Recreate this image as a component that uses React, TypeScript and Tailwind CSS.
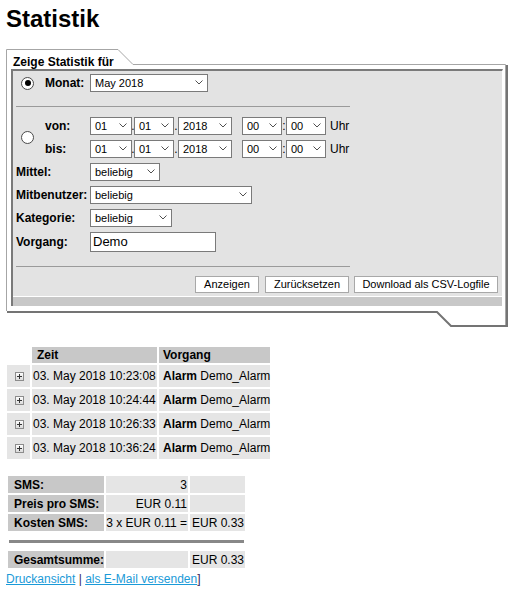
import React from "react";

function Chevron() {
  return (
    <svg width="8" height="5" viewBox="0 0 8 5" className="block">
      <path d="M0.5 0.5 L4 4 L7.5 0.5" stroke="#505050" strokeWidth="1" fill="none" />
    </svg>
  );
}

function Sel({ className, value }: { className: string; value: string }) {
  return (
    <div
      className={
        "relative h-[18px] shrink-0 border border-[#7a7a7a] bg-white pl-[4px] text-[11px] leading-[16px] whitespace-nowrap " +
        className
      }
    >
      {value}
      <span className="absolute right-[4px] top-[5px]">
        <Chevron />
      </span>
    </div>
  );
}

function Radio({ checked }: { checked?: boolean }) {
  return (
    <span className="flex h-[13px] w-[13px] items-center justify-center rounded-full border border-[#4a4a4a] bg-white">
      {checked ? <span className="h-[6px] w-[6px] rounded-full bg-black" /> : null}
    </span>
  );
}

function Sep({ ch, w }: { ch: string; w: string }) {
  return (
    <span className={"flex shrink-0 justify-center text-[12px] leading-[18px] " + w}>
      {ch}
    </span>
  );
}

function DateRow({ label }: { label: string }) {
  return (
    <div className="flex h-[18px] items-center">
      <span className="w-[45px] shrink-0 text-[12px] font-bold leading-[14px]">{label}</span>
      <Sel className="w-[42px]" value="01" />
      <Sep ch="." w="w-[2px]" />
      <Sel className="w-[40px]" value="01" />
      <Sep ch="." w="w-[4px]" />
      <Sel className="w-[54px]" value="2018" />
      <span className="w-[10px] shrink-0" />
      <Sel className="w-[40px]" value="00" />
      <Sep ch=":" w="w-[4px]" />
      <Sel className="w-[40px]" value="00" />
      <span className="ml-[4px] text-[12px] leading-[14px]">Uhr</span>
    </div>
  );
}

function Plus() {
  return (
    <svg width="9" height="9" viewBox="0 0 9 9" className="block">
      <defs>
        <linearGradient id="pg" x1="0" y1="0" x2="0" y2="1">
          <stop offset="0" stopColor="#ffffff" />
          <stop offset="1" stopColor="#d8d8d8" />
        </linearGradient>
      </defs>
      <rect x="0.5" y="0.5" width="8" height="8" fill="url(#pg)" stroke="#8c8c8c" />
      <path d="M2 4.5 H7 M4.5 2 V7" stroke="#333" strokeWidth="1" />
    </svg>
  );
}

const times = [
  "03. May 2018 10:23:08",
  "03. May 2018 10:24:44",
  "03. May 2018 10:26:33",
  "03. May 2018 10:36:24",
];

export default function App() {
  return (
    <div className="min-h-[604px] w-[528px] bg-white pl-[6px] font-['Liberation_Sans',Arial,sans-serif] text-black">
      <h1 className="pt-[5px] text-[24px] font-bold leading-[28px]">Statistik</h1>

      {/* Frame */}
      <div className="relative mt-[16px] h-[279px] w-[502px]">
        <svg
          className="pointer-events-none absolute inset-0"
          width="502"
          height="279"
          viewBox="0 0 502 279"
        >
          <path
            d="M0.5 262 V0.5 H112 L127 15.5 H499.5 V276"
            stroke="#a6a6a6"
            strokeWidth="1"
            fill="none"
          />
          <path
            d="M1 263 H431 L445 277 H501 V16"
            stroke="#747474"
            strokeWidth="2"
            fill="none"
          />
        </svg>
        <div className="relative">
          <div className="ml-[7px] pt-[7px] text-[12px] font-bold leading-[13px]">
            Zeige Statistik für
          </div>
          <div className="ml-[5px] w-[492px] border-l-2 border-r border-t-2 border-l-[#7a7a7a] border-r-white border-t-[#7a7a7a] bg-[#e3e3e3]">
            <div className="pl-[3px]">
              {/* Monat */}
              <div className="mt-[3px] flex h-[18px] items-center">
                <span className="w-[29px] shrink-0 pl-[5px]">
                  <Radio checked />
                </span>
                <span className="w-[45px] shrink-0 text-[12px] font-bold leading-[14px]">Monat:</span>
                <Sel className="w-[118px]" value="May 2018" />
              </div>

              <div className="mt-[14px] h-px w-[334px] bg-[#9a9a9a]" />

              {/* von / bis */}
              <div className="mt-[10px] flex">
                <span className="flex w-[29px] shrink-0 items-center pl-[5px]">
                  <Radio />
                </span>
                <div className="flex flex-col gap-[5px]">
                  <DateRow label="von:" />
                  <DateRow label="bis:" />
                </div>
              </div>

              <div className="mt-[5px] flex h-[18px] items-center">
                <span className="w-[74px] shrink-0 text-[12px] font-bold leading-[14px]">Mittel:</span>
                <Sel className="w-[70px]" value="beliebig" />
              </div>
              <div className="mt-[5px] flex h-[18px] items-center">
                <span className="w-[74px] shrink-0 whitespace-nowrap text-[12px] font-bold leading-[14px]">
                  Mitbenutzer:
                </span>
                <Sel className="w-[162px]" value="beliebig" />
              </div>
              <div className="mt-[5px] flex h-[18px] items-center">
                <span className="w-[74px] shrink-0 text-[12px] font-bold leading-[14px]">Kategorie:</span>
                <Sel className="w-[82px]" value="beliebig" />
              </div>
              <div className="mt-[5px] flex h-[20px] items-center">
                <span className="w-[74px] shrink-0 text-[12px] font-bold leading-[14px]">Vorgang:</span>
                <div className="h-[20px] w-[126px] border border-[#7a7a7a] bg-white pl-[2px] text-[13px] leading-[18px]">
                  Demo
                </div>
              </div>

              <div className="mt-[14px] h-px w-[334px] bg-[#9a9a9a]" />

              <div className="mt-[9px] flex justify-end pr-[4px]">
                <div className="h-[17px] w-[64px] border border-[#a8a8a8] bg-white text-center text-[11px] leading-[15px]">
                  Anzeigen
                </div>
                <div className="ml-[6px] h-[17px] w-[84px] border border-[#a8a8a8] bg-white text-center text-[11px] leading-[15px]">
                  Zurücksetzen
                </div>
                <div className="ml-[5px] h-[17px] w-[144px] border border-[#a8a8a8] bg-white text-center text-[11px] leading-[15px]">
                  Download als CSV-Logfile
                </div>
              </div>
            </div>
            <div className="mt-[3px] h-[10px] border-t border-white bg-[#c8c8c8]" />
          </div>
        </div>
      </div>

      {/* Event table */}
      <table className="-ml-[1px] mt-[17px] w-[267px] table-fixed border-separate border-spacing-[2px] text-[12px] leading-[14px]">
        <thead>
          <tr>
            <th className="w-[23px] p-0" />
            <th className="h-[16px] w-[125px] bg-[#c8c8c8] p-0 pl-[5px] text-left font-bold">Zeit</th>
            <th className="w-[111px] bg-[#c8c8c8] p-0 pl-[4px] text-left font-bold">Vorgang</th>
          </tr>
        </thead>
        <tbody>
          {times.map((t) => (
            <tr key={t}>
              <td className="h-[22px] bg-[#e5e5e5] p-0 pl-[8px]">
                <Plus />
              </td>
              <td className="whitespace-nowrap bg-[#e5e5e5] p-0 pl-[1px]">{t}</td>
              <td className="whitespace-nowrap bg-[#e5e5e5] p-0 pl-[4px]">
                <b>Alarm</b> Demo_Alarm
              </td>
            </tr>
          ))}
        </tbody>
      </table>

      {/* Summary table */}
      <table className="mt-[13px] w-[241px] table-fixed border-separate border-spacing-[2px] text-[12px] leading-[14px]">
        <tbody>
          <tr>
            <td className="h-[17px] w-[96px] whitespace-nowrap bg-[#c8c8c8] p-0 pl-[6px] font-bold">SMS:</td>
            <td className="w-[82px] whitespace-nowrap bg-[#e5e5e5] p-0 pr-[1px] text-right">3</td>
            <td className="w-[55px] whitespace-nowrap bg-[#e5e5e5] p-0 pl-[2px]" />
          </tr>
          <tr>
            <td className="h-[17px] whitespace-nowrap bg-[#c8c8c8] p-0 pl-[6px] font-bold">Preis pro SMS:</td>
            <td className="whitespace-nowrap bg-[#e5e5e5] p-0 pr-[1px] text-right">EUR 0.11</td>
            <td className="bg-[#e5e5e5] p-0" />
          </tr>
          <tr>
            <td className="h-[17px] whitespace-nowrap bg-[#c8c8c8] p-0 pl-[6px] font-bold">Kosten SMS:</td>
            <td className="whitespace-nowrap bg-[#e5e5e5] p-0 pr-[1px] text-right">3 x EUR 0.11 =</td>
            <td className="whitespace-nowrap bg-[#e5e5e5] p-0 pl-[2px]">EUR 0.33</td>
          </tr>
          <tr>
            <td colSpan={3} className="h-[16px] p-0">
              <div className="mx-[1px] h-[3px] bg-[#888888]" />
            </td>
          </tr>
          <tr>
            <td className="h-[17px] whitespace-nowrap bg-[#c8c8c8] p-0 pl-[6px] font-bold">Gesamtsumme:</td>
            <td className="bg-[#e5e5e5] p-0" />
            <td className="whitespace-nowrap bg-[#e5e5e5] p-0 pl-[2px]">EUR 0.33</td>
          </tr>
        </tbody>
      </table>

      <div className="mt-[2px] text-[12px] leading-[14px]">
        <a className="text-[#1a9ad8] underline">Druckansicht</a>
        <span className="text-[#3a2a5a]"> | </span>
        <a className="text-[#1a9ad8] underline">als E-Mail versenden</a>
        <span className="text-[#3a2a5a]">]</span>
      </div>
    </div>
  );
}
